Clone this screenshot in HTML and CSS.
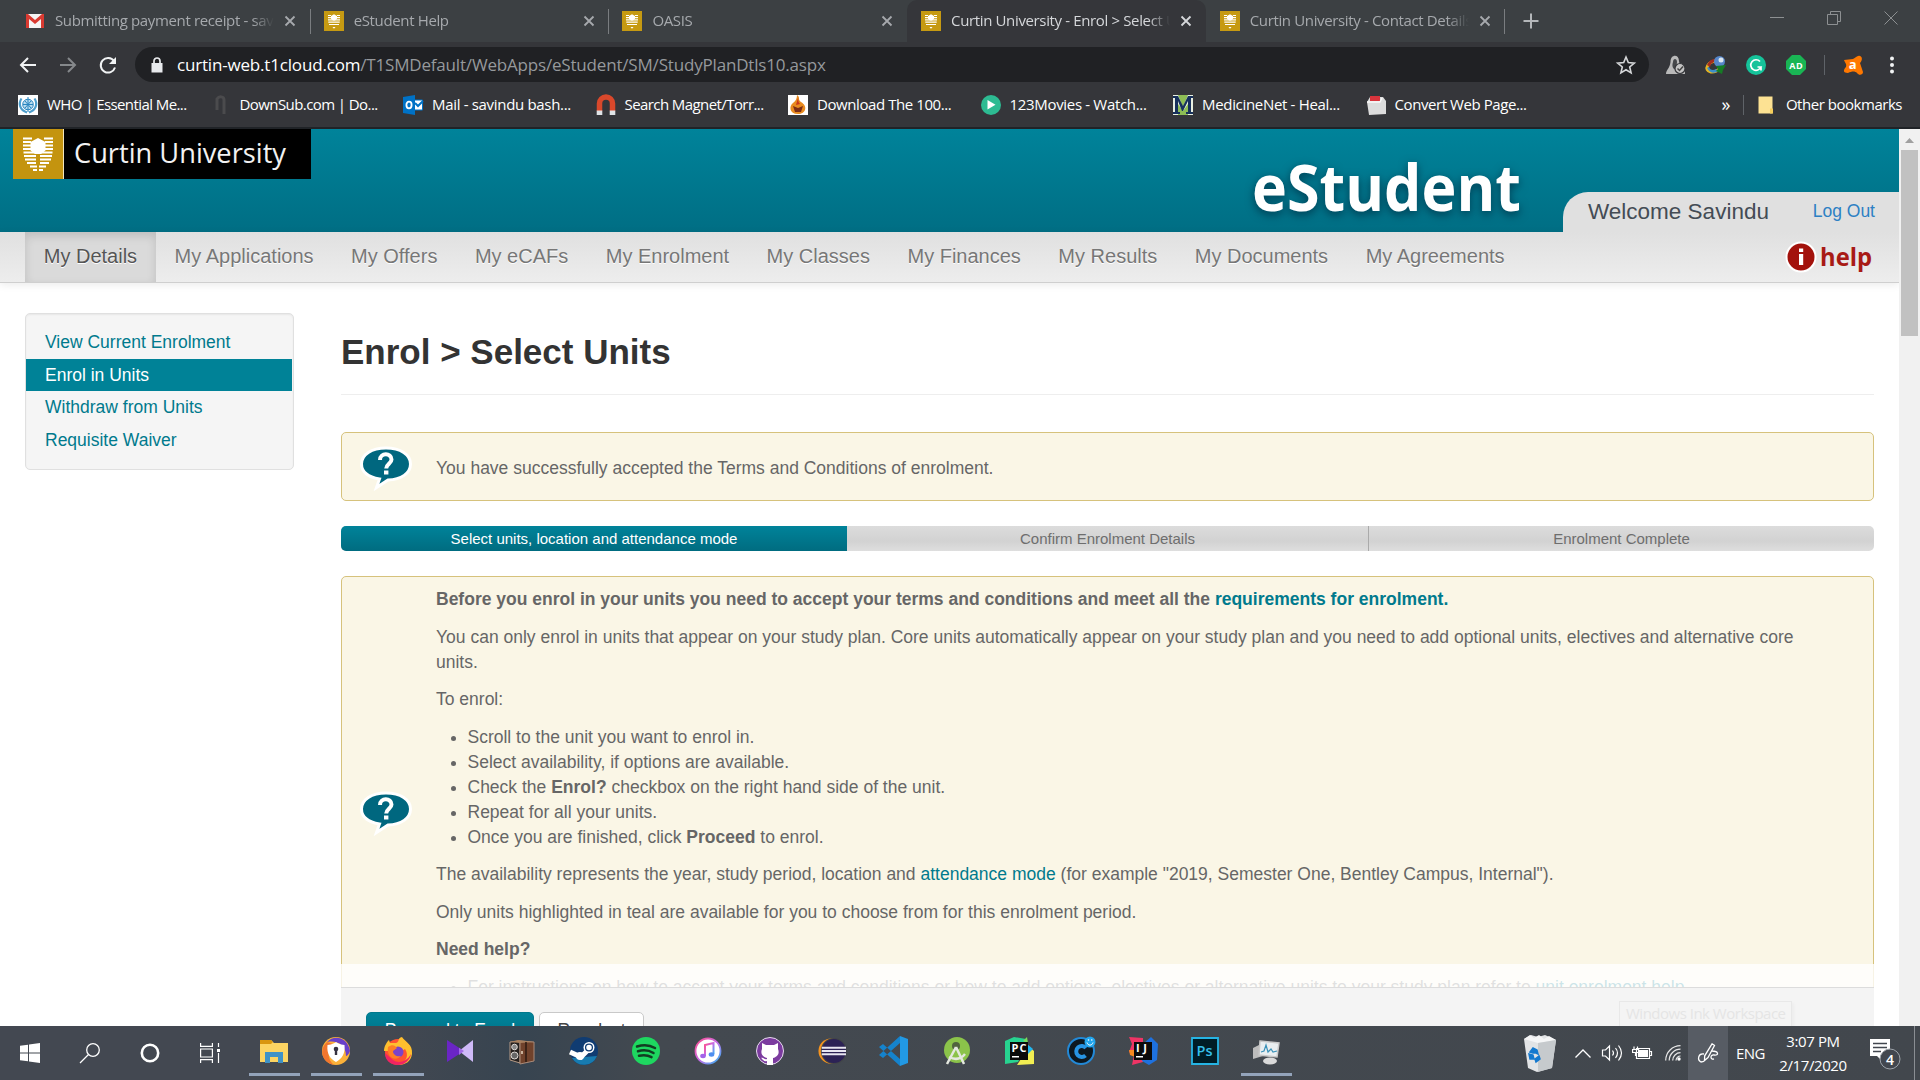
FILE: index.html
```html
<!DOCTYPE html>
<html lang="en">
<head>
<meta charset="utf-8">
<title>Curtin University - Enrol &gt; Select Units</title>
<link rel="stylesheet" href="styles.css">
</head>
<body>
<svg class="defs" aria-hidden="true">
  <symbol id="curtin" viewBox="0 0 20 20"><path fill="#c69a12" d="M0 0h20v20H0z"/><path fill="#fff" d="M4 4h3v1H4zM13 4h3v1h-3zM4 6h3v1.2H4zM13 6h3v1.2h-3zM4 8.300h12v1.200H4zM4.300 10.600h11.400v1.200H4.300zM5 12.900h10v1.200H5zM8.500 16h3l-1.500 1.800z"/><path fill="#fff" d="M10 3.300l3 1.600v2.800l-2 1.700H9L7 7.700V4.900z"/></symbol>
  <symbol id="close" viewBox="0 0 12 12"><path d="M1.500 1.500l9 9M10.500 1.500l-9 9" stroke="currentColor" stroke-width="1.800"/></symbol>
  <symbol id="bubble" viewBox="0 0 54 50"><path d="M27 6c14.500 0 24.500 6.500 24.500 16S42 37.500 29 38l-11.500 7.500 3-8.500C9.500 35 2.500 30 2.500 22 2.500 12.500 12.500 6 27 6z" fill="#00677f" stroke="#fff" stroke-width="3"/><path d="M21 18c0-7.500 11.500-7.500 11.500-.5 0 4-5.300 4.500-5.300 9" fill="none" stroke="#fff" stroke-width="4"/><path d="M25 28.500h4.400v4H25z" fill="#fff"/></symbol>
</svg>

<header class="tabs">
  <div class="tab"><svg class="fav" viewBox="0 0 20 20"><path fill="#f4f4f4" d="M1 3h18v14H1z"/><path fill="#d93a31" d="M1 3h2l7 6 7-6h2v14h-3V8l-6 5-6-5v9H1z"/></svg><span class="tab-title">Submitting payment receipt - savindu</span><svg class="x"><use href="#close"/></svg></div>
  <div class="tab sep"><svg class="fav"><use href="#curtin"/></svg><span class="tab-title">eStudent Help</span><svg class="x"><use href="#close"/></svg></div>
  <div class="tab sep"><svg class="fav"><use href="#curtin"/></svg><span class="tab-title">OASIS</span><svg class="x"><use href="#close"/></svg></div>
  <div class="tab active"><svg class="fav"><use href="#curtin"/></svg><span class="tab-title">Curtin University - Enrol &gt; Select Units</span><svg class="x"><use href="#close"/></svg></div>
  <div class="tab"><svg class="fav"><use href="#curtin"/></svg><span class="tab-title">Curtin University - Contact Details</span><svg class="x"><use href="#close"/></svg></div>
  <div class="newtab sep"><svg width="16" height="16" viewBox="0 0 16 16"><path d="M8 .5v15M.5 8h15" stroke="#b4b7ba" stroke-width="2"/></svg></div>
  <div class="winctl">
    <svg width="14" height="14" viewBox="0 0 14 14"><path d="M0 6.500h14" stroke="#8d9092"/></svg>
    <svg width="14" height="14" viewBox="0 0 14 14"><path d="M.5 3.500h10v10H.5zM3.500 3.500v-3h10v10h-3" fill="none" stroke="#8d9092"/></svg>
    <svg width="14" height="14" viewBox="0 0 14 14"><path d="M.5.500l13 13M13.500.500l-13 13" stroke="#8d9092"/></svg>
  </div>
</header>

<div class="toolbar">
  <svg class="navicon" viewBox="0 0 20 20"><path d="M18 10H3M10 3l-7 7 7 7" fill="none" stroke="#f1f3f4" stroke-width="2"/></svg>
  <svg class="navicon" viewBox="0 0 20 20"><path d="M2 10h15M10 3l7 7-7 7" fill="none" stroke="#85888b" stroke-width="2"/></svg>
  <svg class="navicon" viewBox="0 0 20 20"><path d="M16 6A7.300 7.300 0 1 0 17 12.500" fill="none" stroke="#f1f3f4" stroke-width="2"/><path d="M18 2v7h-7z" fill="#f1f3f4"/></svg>
  <div class="omnibox">
    <svg width="12" height="16" viewBox="0 0 12 16"><path d="M.5 6h11v9.500H.5z" fill="#e8eaed"/><path d="M3 6V4a3 3 0 0 1 6 0v2" fill="none" stroke="#e8eaed" stroke-width="1.700"/></svg>
    <span class="url"><b>curtin-web.t1cloud.com</b>/T1SMDefault/WebApps/eStudent/SM/StudyPlanDtls10.aspx</span>
    <svg width="20" height="20" viewBox="0 0 20 20"><path d="M10 2l2.300 5.600 6 .5-4.600 3.900 1.400 5.900-5.100-3.200-5.100 3.200L6.300 12 1.700 8.100l6-.5z" fill="none" stroke="#d5d7d9" stroke-width="1.600"/></svg>
  </div>
  <div class="exts">
    <svg class="ext" viewBox="0 0 20 20"><path d="M0 19c0-4 4-6 4.500-12C4.500-1 13-1 13 6c0 5 7 8 6 13z" fill="#b9b9b9"/><path d="M7 7c0-4 4-4 4 0s-2 6-2 7-4-1-2-7z" fill="#45474a"/><circle cx="14" cy="13.500" r="5" fill="#c4c4c4" stroke="#35363a" stroke-width="1.200"/><path d="M11.500 13.500l2 2 3.500-4" fill="none" stroke="#444" stroke-width="1.500"/></svg>
    <svg class="ext" viewBox="0 0 20 20"><ellipse cx="8" cy="11.500" rx="7.500" ry="5" fill="none" stroke="#e7b521" stroke-width="3" transform="rotate(-25 8 11.500)"/><path d="M1 13c2 5 8 6 11 3l-2-2C7 16 4 15 3 12z" fill="#3d8fc9"/><path d="M1 10q3-7 9-6L8 7 5 9l-1 3z" fill="#a32d20"/><circle cx="13.500" cy="6.500" r="5.500" fill="#5686c9"/><circle cx="15" cy="5" r="2.500" fill="#dbe6ef"/><path d="M10 11l10-1-3 5-1 4-6-3 2-2z" fill="#167c26"/></svg>
    <svg class="ext" viewBox="0 0 20 20"><circle cx="10" cy="10" r="10" fill="#15c39a"/><path d="M14 6.500A5.300 5.300 0 1 0 15 12h-3.500M15 12v3.500" fill="none" stroke="#fff" stroke-width="1.700"/></svg>
    <svg class="ext" viewBox="0 0 20 20"><path d="M6 0h8l6 6v8l-6 6H6l-6-6V6z" fill="#19b554"/><text x="3.200" y="13.500" class="ad" textLength="13.500">AD</text></svg>
    <span class="vline"></span>
    <svg class="ext" viewBox="0 0 20 20"><path d="M1 5l9-1c3-1 4-4 7-3 3 1 2 5 0 7l3 9c0 3-4 4-6 1-2-2-5-2-9 0-5 0-5-3-2-6 1-3-1-4-2-7z" fill="#ff7800"/><text x="5.700" y="13.500" class="av">a</text></svg>
    <svg width="4" height="20" viewBox="0 0 4 20"><circle cx="2" cy="3.500" r="2" fill="#f1f3f4"/><circle cx="2" cy="10" r="2" fill="#f1f3f4"/><circle cx="2" cy="16.500" r="2" fill="#f1f3f4"/></svg>
  </div>
</div>

<nav class="bookmarks">
  <a class="bm"><svg class="fav" viewBox="0 0 20 20"><path fill="#fff" d="M0 0h20v20H0z"/><circle cx="10" cy="9.500" r="5.300" fill="#b9dcf0" stroke="#2a86bf"/><path d="M10 2v15M5 9.500h10M7 6l6 7M13 6l-6 7" stroke="#2a86bf"/><path d="M3.500 3.500C0 9 2 15 9 17.500M16.500 3.500C20 9 18 15 11 17.500" fill="none" stroke="#4d9ecc" stroke-width="2.200"/></svg><span class="tight">WHO | Essential Me...</span></a>
  <a class="bm"><svg class="fav" viewBox="0 0 20 20"><path d="M6 15V4c2-3 7-3 7 1v14" fill="none" stroke="#4b4b4d" stroke-width="3"/></svg><span class="tight">DownSub.com | Do...</span></a>
  <a class="bm"><svg class="fav" viewBox="0 0 20 20"><path fill="#fff" stroke="#0072c6" d="M11 5h8.500v10H11z"/><path d="M12 8l3 3 5-5" fill="none" stroke="#0072c6" stroke-width="2"/><path d="M0 2l12-2v20L0 18z" fill="#0072c6"/><ellipse cx="6" cy="10" rx="2.600" ry="3.300" fill="none" stroke="#fff" stroke-width="1.800"/></svg><span>Mail - savindu bash...</span></a>
  <a class="bm"><svg class="fav" viewBox="0 0 20 20"><path d="M3.500 16V8.500a6.500 6.500 0 0 1 13 0V16" fill="none" stroke="#d9482b" stroke-width="5.500"/><path d="M.7 15.500h5.600V20H.7zM13.700 15.500h5.600V20h-5.600z" fill="#dfe3e6"/></svg><span class="tight">Search Magnet/Torr...</span></a>
  <a class="bm"><svg class="fav" viewBox="0 0 20 20"><path fill="#fff" d="M0 0h20v20H0z"/><path d="M9 0c4 3 0 4 4 7 7 4 5 12-3 12C1 19 1 11 5 8c3-2 4-5 4-8z" fill="#e88b1f"/><path d="M5 11l5 2 5-2-2 6H7z" fill="#7c2d16"/><path d="M10 3q0 4 2 6l-4 1z" fill="#c7351c"/></svg><span class="snug">Download The 100...</span></a>
  <a class="bm"><svg class="fav" viewBox="0 0 20 20"><circle cx="10" cy="10" r="10" fill="#2dbb92"/><path d="M6.500 5l8 4.800-8 4.800z" fill="#fff"/></svg><span>123Movies - Watch...</span></a>
  <a class="bm"><svg class="fav" viewBox="0 0 20 20"><path fill="#e9f0e2" d="M0 0h20v20H0z"/><path fill="#8dbd55" d="M5 0h10l-5 12zM5 20h10V9l-5 7-5-7z"/><path d="M0 1h5l5 10 5-10h5v2h-2v14h2v2h-7v-2h2V6l-5 10h-1L5 6v11h2v2H0v-2h2V3H0z" fill="#17315c"/></svg><span>MedicineNet - Heal...</span></a>
  <a class="bm"><svg class="fav" viewBox="0 0 20 20"><path d="M1 7l3-5h13l3 4v13l-17 1z" fill="#dcdcdc"/><path d="M4 1h10v5H4z" fill="#d8343c"/><path d="M1 7h13l2-4" fill="none" stroke="#f7f7f7" stroke-width="1.500"/></svg><span class="snug">Convert Web Page...</span></a>
  <div class="other"><span class="more">»</span><span class="vline"></span><svg width="16" height="20" viewBox="0 0 16 20"><path d="M.5 1.500h14v17H.5z" fill="#fde293"/><path d="M12 13.500h3v5h-3z" fill="#f5cd5b"/></svg><span class="otxt">Other bookmarks</span></div>
</nav>

<section class="view">
 <div class="page">
  <header class="banner">
    <div class="logo"><svg width="51" height="50" viewBox="0 0 51 50"><path fill="#c4940f" d="M0 0h50v50H0z"/><path d="M50.500 0v50" stroke="#f3e6bd"/><g stroke="#fff" stroke-width="1.900"><path d="M10 9.500h9M31 9.500h9M10 13h8M32 13h8M10 16.500h8M32 16.500h8M10 20h10M30 20h10M10.500 23.500h29M11 27h12M27 27h12M12 30.500h11M27 30.500h11M14 34h9M27 34h9M17 37.500h7M26 37.500h7M20 41h4M26 41h4"/></g><path d="M25 9l7.500 4v8.500L28 25h-6l-4.500-3.500V13z" fill="#fff"/></svg><svg class="wordmark" width="224" height="50"><text x="10" y="34" textLength="212" lengthAdjust="spacingAndGlyphs">Curtin University</text></svg></div>
    <svg class="product" width="290" height="76"><text x="8" y="56" textLength="269" lengthAdjust="spacingAndGlyphs">eStudent</text></svg>
    <div class="welcome"><span>Welcome Savindu</span><a>Log Out</a></div>
  </header>
  <nav class="menu">
    <a class="on">My Details</a><a>My Applications</a><a>My Offers</a><a>My eCAFs</a><a>My Enrolment</a><a>My Classes</a><a>My Finances</a><a>My Results</a><a>My Documents</a><a>My Agreements</a>
    <div class="help"><svg width="32" height="32" viewBox="0 0 32 32"><circle cx="16" cy="16" r="14.500" fill="#a3120c" stroke="#fff" stroke-width="2"/><path d="M14 13h4.200v11H14zM14 7.500h4.200V11H14z" fill="#fff"/></svg><svg width="60" height="36"><text x="3" y="25" textLength="52" lengthAdjust="spacingAndGlyphs">help</text></svg></div>
  </nav>
  <div class="columns">
    <aside class="side"><a>View Current Enrolment</a><a class="on">Enrol in Units</a><a>Withdraw from Units</a><a>Requisite Waiver</a></aside>
    <main class="main">
      <h1>Enrol &gt; Select Units</h1>
      <div class="note short"><svg class="bub"><use href="#bubble"/></svg><p>You have successfully accepted the Terms and Conditions of enrolment.</p></div>
      <div class="steps"><span class="s1">Select units, location and attendance mode</span><span class="s2">Confirm Enrolment Details</span><span class="s3">Enrolment Complete</span></div>
      <div class="note long"><svg class="bub"><use href="#bubble"/></svg>
        <div class="text">
          <p><b>Before you enrol in your units you need to accept your terms and conditions and meet all the <a>requirements for enrolment.</a></b></p>
          <p>You can only enrol in units that appear on your study plan. Core units automatically appear on your study plan and you need to add optional units, electives and alternative core units.</p>
          <p>To enrol:</p>
          <ul>
            <li>Scroll to the unit you want to enrol in.</li>
            <li>Select availability, if options are available.</li>
            <li>Check the <b>Enrol?</b> checkbox on the right hand side of the unit.</li>
            <li>Repeat for all your units.</li>
            <li>Once you are finished, click <b>Proceed</b> to enrol.</li>
          </ul>
          <p>The availability represents the year, study period, location and <a>attendance mode</a> (for example "2019, Semester One, Bentley Campus, Internal").</p>
          <p>Only units highlighted in teal are available for you to choose from for this enrolment period.</p>
          <p><b>Need help?</b></p>
          <ul><li>For instructions on how to accept your terms and conditions or how to add options, electives or alternative units to your study plan refer to <a>unit enrolment help</a></li></ul>
        </div>
      </div>
    </main>
  </div>
  <div class="sticky"><div class="fade"></div><div class="actions"><button class="primary">Proceed to Enrol</button><button>Reselect</button></div></div>
  <div class="tip">Windows Ink Workspace</div>
 </div>
 <div class="scroll"><svg width="21" height="21" viewBox="0 0 21 21"><path d="M6 14l4.500-5 4.500 5z" fill="#a0a0a0"/></svg><div class="thumb"></div></div>
</section>

<footer class="taskbar">
  <div class="start">
    <svg width="20" height="20" viewBox="0 0 20 20"><path d="M0 2.800l8-1.100v7.800H0zM9 1.500L20 0v9.500H9zM0 10.500h8v7.800l-8-1.100zM9 10.500h11V20L9 18.500z" fill="#fff"/></svg>
    <svg width="20" height="20" viewBox="0 0 20 20"><circle cx="13" cy="7" r="6.300" fill="none" stroke="#fff" stroke-width="1.300"/><path d="M8.500 11.500L0 20" stroke="#fff" stroke-width="1.300"/></svg>
    <svg width="20" height="20" viewBox="0 0 20 20"><circle cx="10" cy="10" r="8.200" fill="none" stroke="#fff" stroke-width="2.600"/></svg>
    <svg width="20" height="20" viewBox="0 0 20 20"><path d="M.6 0v3.400h11.800V0M.6 20v-3.400h11.800V20M.6 6h11.800v8H.6zM18.500 0v4M18.500 10v10" fill="none" stroke="#fff" stroke-width="1.200"/><path d="M17 6h3v3h-3z" fill="#fff"/></svg>
  </div>
  <div class="apps">
    <span class="app open"><svg viewBox="0 0 28 28"><path d="M0 3h11l3 3h14v19H0z" fill="#fcd462"/><path d="M0 3h11l2 2-2 2H0z" fill="#d9960f"/><path d="M5 15h18v11h-5v-6h-8v6H5z" fill="#3f92c7"/></svg></span>
    <span class="app open"><svg viewBox="0 0 28 28"><circle cx="14" cy="14" r="14" fill="#fbb13a"/><path d="M5 5C12-3 26 0 28 14c-2 5-4 5-4 5C24 8 15 3 5 5z" fill="#6940c9"/><path d="M5 5C-3 12-1 25 12 28 5 22 5 14 11 7z" fill="#f2762e"/><path d="M5.500 8C10 8 14 5 14 5s4 3 8.500 3c1 9-3 14-8.500 17C8.500 22 4.500 17 5.500 8z" fill="#fff"/><circle cx="14" cy="12" r="2.300" fill="#35313f"/><path d="M12.800 12h2.400v6h-2.400z" fill="#35313f"/></svg></span>
    <span class="app open"><svg viewBox="0 0 28 28"><circle cx="14" cy="15" r="13" fill="#ff5330"/><path d="M0 14C0 9 3 5 5 3l1 3h6C16 5 13 1 18 0c3 5 11 7 10 17-1 7-6 11-14 11 9-3 11-10 7-16l-3 2z" fill="#ffbf2e"/><path d="M1 16C1 24 7 28 14 28c7 0 12-5 13-11-4 8-13 10-18 6z" fill="#f02462"/><circle cx="14" cy="15" r="5.500" fill="#7b43c9"/><path d="M4 10c4-3 7-2 9 1l-4 3c0 4 4 6 8 5-5 6-15 2-13-9z" fill="#ff7f24"/></svg></span>
    <span class="app"><svg viewBox="0 0 28 28"><path d="M1 3l17 11L1 25z" fill="#6a25c5"/><path d="M27 3L13 14l14 11z" fill="#cfbaf8"/><path d="M13 10.700l5 3.300-5 4z" fill="#a26ae6"/></svg></span>
    <span class="app"><svg viewBox="0 0 28 28"><path d="M2 5l10-1v22L2 23z" fill="#26211f" stroke="#b59a86"/><path d="M12 4l14 1v19l-14 3z" fill="#70422b" stroke="#a98b7a"/><path d="M2 5l8-2 16 2-14 1z" fill="#a8805f"/><circle cx="6.500" cy="10" r="2.800" fill="#888" stroke="#e1dcd8"/><circle cx="6.500" cy="18.500" r="3.500" fill="#666" stroke="#e1dcd8"/><path d="M18 5v20" stroke="#2c1a12" stroke-width="1.500"/><path d="M14 14v3" stroke="#e9d9c0" stroke-width="1.500"/></svg></span>
    <span class="app"><svg viewBox="0 0 28 28"><circle cx="14" cy="14" r="14" fill="#103c72"/><path d="M2 21a14 14 0 0 0 25-2z" fill="#177bb0"/><path d="M0 15l11 5 7-7" fill="none" stroke="#fff" stroke-width="5"/><circle cx="10" cy="19" r="4" fill="#fff"/><circle cx="19" cy="10.500" r="5.500" fill="#fff"/><circle cx="19" cy="10.500" r="3.400" fill="#fff" stroke="#103c72" stroke-width="1.300"/></svg></span>
    <span class="app"><svg viewBox="0 0 28 28"><circle cx="14" cy="14" r="14" fill="#1ed760"/><path d="M5 9.500c6-2 13-1.500 18 1.500M6 14.300c5-1.500 11-1 15.500 1.700M7 18.800c5-1.200 9-.6 12.500 1.400" fill="none" stroke="#123d22" stroke-width="2.500" stroke-linecap="round"/></svg></span>
    <span class="app"><svg viewBox="0 0 28 28"><defs><linearGradient id="it" x1="0" x2="1" y1="0" y2="1"><stop offset="0" stop-color="#ff4d8c"/><stop offset=".5" stop-color="#c86be6"/><stop offset="1" stop-color="#2bb8f5"/></linearGradient></defs><circle cx="14" cy="14" r="12.500" fill="#fff" stroke="url(#it)" stroke-width="1.800"/><path d="M11 19V8l8.500-2v11" fill="none" stroke="url(#it)" stroke-width="2"/><ellipse cx="9" cy="19" rx="2.800" ry="2.200" fill="#a363e8"/><ellipse cx="17.500" cy="17.500" rx="2.800" ry="2.200" fill="#4f8ef0"/></svg></span>
    <span class="app"><svg viewBox="0 0 28 28"><circle cx="14" cy="14" r="13.500" fill="#7b3b9f" stroke="#e7dcee"/><path d="M6 6l4 2h8l4-2v6c2 5-1 8-5 9v7h-6v-4c-4 1-4-2-6-3 3-1 3 2 6 1v-1c-4-1-7-4-5-9z" fill="#fff"/></svg></span>
    <span class="app"><svg viewBox="0 0 30 28"><circle cx="14" cy="14" r="13.500" fill="#f7941e"/><circle cx="17" cy="14" r="14" fill="#414448"/><circle cx="17" cy="14" r="12.800" fill="#2c2255"/><path d="M4 10.500h26M4 14h26M4 17.500h26" stroke="#e8e6f0" stroke-width="2"/></svg></span>
    <span class="app"><svg viewBox="0 0 28 28"><path d="M20-1l8 3v24l-8 3z" fill="#2299e4"/><path d="M20 6L3 21l-4-3L20-1zM20 22L3 7l-4 3 21 19z" fill="#1583cd"/></svg></span>
    <span class="app"><svg viewBox="0 0 28 28"><circle cx="14" cy="13" r="13" fill="#8bc34a"/><circle cx="13" cy="9" r="4" fill="#51633e"/><path d="M13 10L4 27M13 10l8 17M6 20c6 3 12 2 16-3" fill="none" stroke="#e4e8df" stroke-width="2.500"/></svg></span>
    <span class="app"><svg viewBox="0 0 28 28"><path d="M0 4L9 0l12 2 1 5-9 18-13 2z" fill="#27d390"/><path d="M21 7l8 7v13l-17 1 4-6 6-14z" fill="#f2ee52"/><path d="M18 4l4-4 1 6z" fill="#7bdb5a"/><path d="M22 7l6 5-5 5z" fill="#20b6f0"/><path d="M5 5h18v18H5z" fill="#0b0b0b"/><path d="M7 19h7v1.500H7z" fill="#fff"/><text x="6.500" y="15" class="jb" textLength="15">PC</text></svg></span>
    <span class="app"><svg viewBox="0 0 28 28"><circle cx="14" cy="14" r="13" fill="#0d1820" stroke="#2389d7" stroke-width="2"/><path d="M19 11a5.500 5.500 0 1 0-.5 7.500" fill="none" stroke="#2794e3" stroke-width="4"/><circle cx="23" cy="5" r="5.500" fill="#21a5ec"/><path d="M20 5.500c1 3.500 5 3.500 6 0" fill="none" stroke="#fff"/><circle cx="21.500" cy="3" r=".8" fill="#fff"/><circle cx="24.800" cy="3" r=".8" fill="#fff"/></svg></span>
    <span class="app"><svg viewBox="0 0 28 28"><path d="M0 0l14 1v24l-11 3 2-10-5-3 3-8z" fill="#ee3465"/><path d="M0 13l6 0v7l-5-2z" fill="#f78a21"/><path d="M15 6l7-6 7 7-1 16-8 5-7-4z" fill="#1e71df"/><path d="M5 5h18v18H5z" fill="#0b0b0b"/><path d="M7 19h7v1.500H7z" fill="#fff"/><text x="7" y="15" class="jb" textLength="11">IJ</text></svg></span>
    <span class="app"><svg viewBox="0 0 28 28"><path d="M1 1h26v26H1z" fill="#001d26" stroke="#26b4e4" stroke-width="1.800"/><text x="5.500" y="18.500" class="ps" textLength="16">Ps</text></svg></span>
    <span class="app open"><svg viewBox="0 0 28 28"><path d="M0 11l10-5v13l-10 3z" fill="#bcbcbc"/><path d="M7 4l19 2-2 14-18-2z" fill="#e9eef0" stroke="#c8c8c8" stroke-width="1.500"/><path d="M8 15l3-1 2-6 2 7 3-3 2 3 4-1" fill="none" stroke="#3a91b8" stroke-width="1.200"/><ellipse cx="17" cy="24" rx="7" ry="3.500" fill="#dadada"/></svg></span>
  </div>
  <div class="tray">
    <svg class="bin" width="32" height="38" viewBox="0 0 32 38"><path d="M0 5l7-4 7 2 7-2 11 5-4 28-15 4-9-4z" fill="#e2e4e6"/><path d="M0 5l14 4 18-3-7-4-5 3-5-4-5 3-4-3z" fill="#f5f6f7"/><path d="M14 9l18-3-4 28-14 4z" fill="#c6cacd"/><path d="M6 18l3-4 4 2 1 4-2-1-3 0zM5 20l4 1 1 4-4 0zM11 25l4-3 1 3-4 3z" fill="#1479cf" stroke="#1479cf" stroke-width="1.500"/></svg>
    <svg width="16" height="9" viewBox="0 0 16 9"><path d="M.5 8.500L8 1l7.500 7.500" fill="none" stroke="#fff" stroke-width="1.300"/></svg>
    <svg class="spk" width="20" height="18" viewBox="0 0 20 18"><path d="M.5 6h3l4-4v14l-4-4h-3zM10.500 6.500q2 2.500 0 5M13.500 4q4 5 0 10M16.500 1.500q6 7.500 0 15" fill="none" stroke="#fff" stroke-width="1.200"/></svg>
    <svg class="bat" width="20" height="14" viewBox="0 0 20 14"><path d="M4.500 2.500h13v10h-13zM17.500 5.500h2v4h-2M2 .5v3M5.500 .5v3M.6 3.500h6v3h-6zM3.500 6v4" fill="none" stroke="#fff" stroke-width="1.200"/><path d="M6 4h10v7H6z" fill="#fff"/></svg>
    <svg class="wifi" width="16" height="16" viewBox="0 0 16 16"><path d="M.7 15.500A14.800 14.800 0 0 1 15.500.7M4.200 15.500A11.300 11.300 0 0 1 15.500 4.200M7.700 15.500A7.800 7.800 0 0 1 15.500 7.700M11 15.500a4.500 4.500 0 0 1 4.500-4.500" fill="none" stroke="#e8e8e8" stroke-width="1.200"/><circle cx="14" cy="14" r="1.700" fill="#fff"/></svg>
    <span class="pen"><svg width="20" height="20" viewBox="0 0 20 20"><path d="M14 .8l2.500 1.700-6.500 12-3.500 3 .2-4.700zM6 11C0 10-1 17 3 19q3 0 4-2M14 8c7 0 7 5 2 4-4-.5-4 5 0 4" fill="none" stroke="#fff" stroke-width="1.300"/></svg></span>
    <span class="lang">ENG</span>
    <span class="clock"><span>3:07 PM</span><span>2/17/2020</span></span>
    <svg class="act" width="32" height="32" viewBox="0 0 32 32"><path d="M1 1h20v17h-9v4l-4-4H1z" fill="#fff"/><path d="M4 5.500h14M4 9.500h14M4 13.500h8" stroke="#42474f" stroke-width="1.300"/><circle cx="21" cy="21" r="10" fill="#42474f" stroke="#9da3aa"/><text x="17" y="26.500" class="cnt">4</text></svg>
    <span class="desk"></span>
  </div>
</footer>
</body>
</html>
```
FILE: styles.css
```css
* { box-sizing: border-box; }
body { margin: 0; width: 1920px; height: 1080px; overflow: hidden; display: flex; flex-direction: column; font-family: "Liberation Sans", Arial, sans-serif; background: #fff; }
.defs { position: absolute; width: 0; height: 0; }
svg { flex: none; display: block; overflow: visible; }
b { font-weight: bold; }

/* browser frame */
.tabs, .toolbar, .bookmarks, .taskbar { font-family: "Open Sans", "Noto Sans", sans-serif; }
.tabs { height: 42px; flex: none; display: flex; background: #3c4043; padding-left: 11px; }
.tab { width: 298.700px; flex: none; display: flex; align-items: center; padding-left: 14px; color: #a6a9ad; }
.tab .tab-title { margin-left: 10px; width: 219px; padding-bottom: 2px; white-space: nowrap; overflow: hidden; font-size: 15px; letter-spacing: -.36px; -webkit-mask-image: linear-gradient(90deg, #000 90%, transparent); mask-image: linear-gradient(90deg, #000 90%, transparent); }
.tab .x { width: 12px; height: 12px; margin-left: 10px; }
.fav { width: 20px; height: 20px; }
.sep { background: linear-gradient(#7a7d80, #7a7d80) 0 9px / 1px 25px no-repeat; }
.active { background: #35363a; border-radius: 10px 10px 0 0; color: #d5d7da; }
.newtab { width: 60px; display: flex; align-items: center; padding-left: 19px; }
.winctl { margin-left: auto; display: flex; gap: 43px; padding: 11px 22px 0 0; }

.toolbar { height: 45px; flex: none; background: #35363a; display: flex; align-items: center; }
.navicon { width: 20px; height: 20px; margin-left: 18px; margin-right: 2px; }
.omnibox { width: 1514px; height: 35px; border-radius: 18px; background: #202124; margin-left: 15px; display: flex; align-items: center; padding: 0 13px 0 16px; }
.url { margin-left: 14px; padding-bottom: 1px; flex: 1; font-size: 17px; color: #96999c; white-space: nowrap; letter-spacing: -.18px; }
.url b { font-weight: normal; color: #fff; }
.exts { display: flex; align-items: center; gap: 20px; margin-left: 17px; }
.ext { width: 20px; height: 20px; }
.vline { width: 1px; height: 20px; background: #5f6368; flex: none; }
.exts .vline { margin: 0 -2px; }
.exts svg:last-child { margin-left: 7px; }
.ad { font: bold 9px "Open Sans", sans-serif; fill: #fff; }
.av { font: bold 13px "Open Sans", sans-serif; fill: #fff; }

.bookmarks { height: 42px; flex: none; background: #35363a; border-bottom: 2px solid #202327; display: flex; align-items: center; padding-left: 18px; padding-bottom: 4px; color: #fff; font-size: 15px; }
.bm { width: 192.500px; display: flex; align-items: center; white-space: nowrap; letter-spacing: -.32px; }
.bm span, .otxt { padding-bottom: 2px; }
.bm span { margin-left: 9px; }
.bm .tight { letter-spacing: -.58px; }
.bm .snug { letter-spacing: -.42px; }
.other { margin-left: auto; display: flex; align-items: center; letter-spacing: -.47px; padding-right: 18px; white-space: nowrap; }
.more { margin-right: 13px; font-size: 18px; line-height: 18px; padding-bottom: 3px; }
.other svg { margin: 0 12px 0 14px; }

/* page */
.view { flex: 1; min-height: 0; display: flex; overflow: hidden; }
.page { width: 1899px; height: 897px; overflow: hidden; position: relative; color: #666; font-size: 17.500px; line-height: 25px; }
.page a { color: #007a8d; }
.banner { height: 103px; background: linear-gradient(#00839a, #006e84); padding-left: 13px; display: flex; justify-content: space-between; }
.logo { display: flex; background: #000; height: 50px; width: 298px; }
.wordmark text { font: 27px "Open Sans", sans-serif; fill: #f2f2f2; }
.product { margin: 26px 29px 0 auto; filter: drop-shadow(0 3px 5px rgba(0,30,50,.65)); }
.product text { font: bold 64px "Open Sans", sans-serif; fill: #fff; }
.welcome { margin-top: 63px; width: 336px; height: 40px; background: #e0e0e0; border-top-left-radius: 25px; display: flex; align-items: center; justify-content: space-between; padding: 0 24px 2px 25px; font-size: 22.500px; color: #444c55; }
.page .welcome a { font-size: 17.500px; color: #2d80c4; }
.menu { height: 51px; background: linear-gradient(#e0e0e0, #ededed); border-bottom: 1px solid #cfcfcf; box-shadow: 0 2px 8px rgba(0,0,0,.08); padding-left: 25px; display: flex; font-size: 20px; line-height: 49px; }
.page .menu a { color: #777; padding: 0 18.750px; text-shadow: 0 1px 0 #fff; white-space: nowrap; }
.page .menu .on { color: #555; background: #dadada; box-shadow: inset 0 4px 10px rgba(0,0,0,.13); }
.help { margin-left: auto; display: flex; padding: 9px 22px 0 0; }
.help text { font: bold 25px "Open Sans", sans-serif; fill: #a81a15; }
.columns { display: flex; align-items: flex-start; padding-left: 25px; }
.side { width: 269px; height: 157px; margin-top: 30px; padding: 12px 1px 0 0; background: #f5f5f5; border: 1px solid #e0e0e0; border-radius: 5px; box-shadow: inset 0 1px 2px rgba(0,0,0,.06); display: flex; flex-direction: column; }
.side a { padding-left: 19px; line-height: 32.700px; white-space: nowrap; }
.page .side .on { background: #008297; color: #fff; }
.main { margin-left: 47px; width: 1533px; padding-top: 44px; }
h1 { margin: 0 0 37px; height: 68px; border-bottom: 1px solid #eee; font-size: 35px; line-height: 50px; color: #333; }
.note { background: #faf6e6; border: 1px solid #d6c27c; border-radius: 5px; display: flex; align-items: center; margin-bottom: 25px; }
.note p { margin: 0 0 12.500px; }
.note .bub { width: 54px; height: 50px; margin: 1px 23px 0 17px; }
.short { height: 69px; }
.note.short p { margin: 3px 0 0; }
.long { height: 471px; }
.text { align-self: flex-start; padding: 10px 48px 0 0; }
.note ul { margin: 0 0 12.500px; padding-left: 31.500px; }
.steps { height: 25px; display: flex; margin-bottom: 25px; font-size: 15px; line-height: 25px; text-align: center; border-radius: 5px; overflow: hidden; background: linear-gradient(#dcdcdc, #d2d2d2 60%, #dedede); color: #6e6e6e; }
.s1 { width: 506px; background: linear-gradient(#00839a, #006c80); color: #fff; }
.s2 { width: 522px; border-right: 1px solid #aaa; }
.s3 { flex: 1; }
.sticky { position: absolute; left: 341px; bottom: 0; width: 1533px; height: 62px; }
.fade { height: 23px; background: rgba(255,255,255,.8); }
.actions { height: 39px; border-top: 1px solid #dcdcdc; background: #f4f4f4; padding: 24px 25px 0; display: flex; gap: 5px; align-items: flex-start; }
button { height: 38px; padding: 0 0 2px; border: 1px solid #c9c9c9; border-radius: 5px; background: #fff; color: #444; font: 17.500px/25px "Liberation Sans", Arial, sans-serif; width: 105px; }
.primary { width: 168px; background: linear-gradient(#00839a, #006c80); border-color: #00788c; color: #fff; }
.tip { position: absolute; left: 1619px; top: 872px; width: 173px; height: 26px; border: 1px solid #e8e8e8; color: #e5e5e5; font: 15px/23px "Open Sans", sans-serif; letter-spacing: -.5px; padding-left: 6px; white-space: nowrap; box-shadow: 2px 2px 3px rgba(0,0,0,.03); }
.scroll { width: 21px; background: #f1f1f1; }
.thumb { width: 17px; height: 186px; margin-left: 2px; background: #c1c1c1; }

/* taskbar */
.taskbar { height: 54px; flex: none; display: flex; background: linear-gradient(90deg, #434851 0, #434851 20%, #374450 27%, #434950 34%, #42474d 100%); color: #fff; }
.start { display: flex; gap: 40px; padding: 17px 0 0 20px; }
.apps { display: flex; margin-left: 23px; }
.app { width: 62.060px; padding-top: 11px; height: 50px; display: flex; justify-content: center; }
.app svg { width: 28px; height: 28px; }
.open { background: linear-gradient(#93a3ba, #93a3ba) center bottom / 51px 3px no-repeat; }
.jb { font: bold 11px "Open Sans", sans-serif; fill: #fff; }
.ps { font: 600 14.500px "Open Sans", sans-serif; fill: #35bfe9; }
.tray { margin-left: auto; display: flex; align-items: center; height: 54px; }
.bin { margin-right: 19px; }
.spk { margin-left: 11px; }
.bat { margin-left: 10px; }
.wifi { margin-left: 13px; }
.pen { width: 40px; height: 54px; margin-left: 7px; background: #575c64; display: flex; align-items: center; justify-content: center; }
.lang { font-size: 15px; width: 45px; text-align: center; letter-spacing: -.5px; }
.clock { width: 80px; display: flex; flex-direction: column; align-items: center; font-size: 15px; line-height: 24px; letter-spacing: -.4px; }
.act { margin: 2px 0 0 16px; }
.cnt { font: 600 14px "Open Sans", sans-serif; fill: #fff; }
.desk { width: 6px; height: 54px; margin-left: 13px; border-left: 1px solid #8a8e93; }
```
